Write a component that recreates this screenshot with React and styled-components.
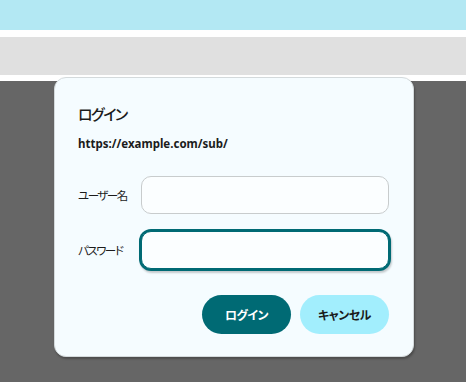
import React from "react";
import styled, { createGlobalStyle } from "styled-components";

const GlobalStyle = createGlobalStyle`
  html, body {
    margin: 0;
    padding: 0;
    background: #ffffff;
  }
  body {
    font-family: "Noto Sans", "Noto Sans CJK JP", sans-serif;
  }
  #root {
    height: 382px;
  }
`;

function App() {
  return (
    <>
      <GlobalStyle />
      <Page>
        <TopBar />
        <SubBar />
        <Backdrop />
        <Dialog role="dialog" aria-labelledby="login-title">
          <Title id="login-title">ログイン</Title>
          <Url>https://example.com/sub/</Url>

          <Form>
            <FieldRow>
              <Label htmlFor="username">ユーザー名</Label>
              <Input id="username" type="text" />
            </FieldRow>
            <FieldRow>
              <Label htmlFor="password">パスワード</Label>
              <Input id="password" type="password" focused />
            </FieldRow>
          </Form>

          <Actions>
            <Button primary>ログイン</Button>
            <Button>キャンセル</Button>
          </Actions>
        </Dialog>
      </Page>
    </>
  );
}

const Page = styled.div`
  position: relative;
  display: flex;
  flex-direction: column;
  height: 382px;
  overflow: hidden;
`;

const TopBar = styled.header`
  height: 30px;
  background: #b3e8f3;
`;

const SubBar = styled.nav`
  height: 38px;
  margin-top: 7px;
  background: #e0e0e0;
`;

const Backdrop = styled.div`
  flex: 1;
  margin-top: 6px;
  background: #666666;
`;

const Dialog = styled.section`
  position: absolute;
  top: 77px;
  left: 54px;
  width: 360px;
  box-sizing: border-box;
  padding: 24px 24px 22px 23px;
  background: #f5fcff;
  border: 1px solid #d4dadc;
  border-radius: 12px;
  box-shadow: 1px 2px 2px rgba(0, 0, 0, 0.25);
  font-family: "Noto Sans", "Noto Sans CJK JP", sans-serif;
  font-feature-settings: "palt";
  color: #1b1b1b;
`;

const Title = styled.h2`
  margin: 0;
  font-family: "Noto Sans CJK JP", sans-serif;
  font-size: 15px;
  line-height: 24px;
  font-weight: 500;
  letter-spacing: -1.5px;
`;

const Url = styled.p`
  margin: 9px 0 0;
  font-size: 11.5px;
  line-height: 18px;
  font-weight: 700;
`;

const Form = styled.div`
  display: flex;
  flex-direction: column;
  gap: 17px;
  margin-top: 23px;
`;

const FieldRow = styled.div`
  display: flex;
  align-items: center;
`;

const Label = styled.label`
  width: 63px;
  flex-shrink: 0;
  font-size: 11.5px;
  letter-spacing: -1.5px;
  font-family: "Noto Sans CJK JP", sans-serif;
`;

const Input = styled.input`
  width: 249px;
  height: 38px;
  box-sizing: border-box;
  padding: 0 10px;
  background: #fbfeff;
  border: 1px solid ${(props) => (props.focused ? "#006a74" : "#c8cccd")};
  border-radius: 10px;
  box-shadow: ${(props) =>
    props.focused ? "0 0 0 2px #006a74, 1px 2px 2px 2px rgba(0,0,0,0.2)" : "none"};
  outline: none;
  font-size: 13px;
`;

const Actions = styled.div`
  display: flex;
  justify-content: flex-end;
  gap: 9px;
  margin-top: 26px;
`;

const Button = styled.button`
  width: 89px;
  height: 39px;
  border: none;
  border-radius: 20px;
  background: ${(props) => (props.primary ? "#006a74" : "#a2eefd")};
  color: ${(props) => (props.primary ? "#ffffff" : "#1b1b1b")};
  font-family: "Noto Sans CJK JP", sans-serif;
  font-feature-settings: "palt";
  font-size: 12px;
  font-weight: 700;
  letter-spacing: -0.5px;
  cursor: pointer;
`;

export default App;
